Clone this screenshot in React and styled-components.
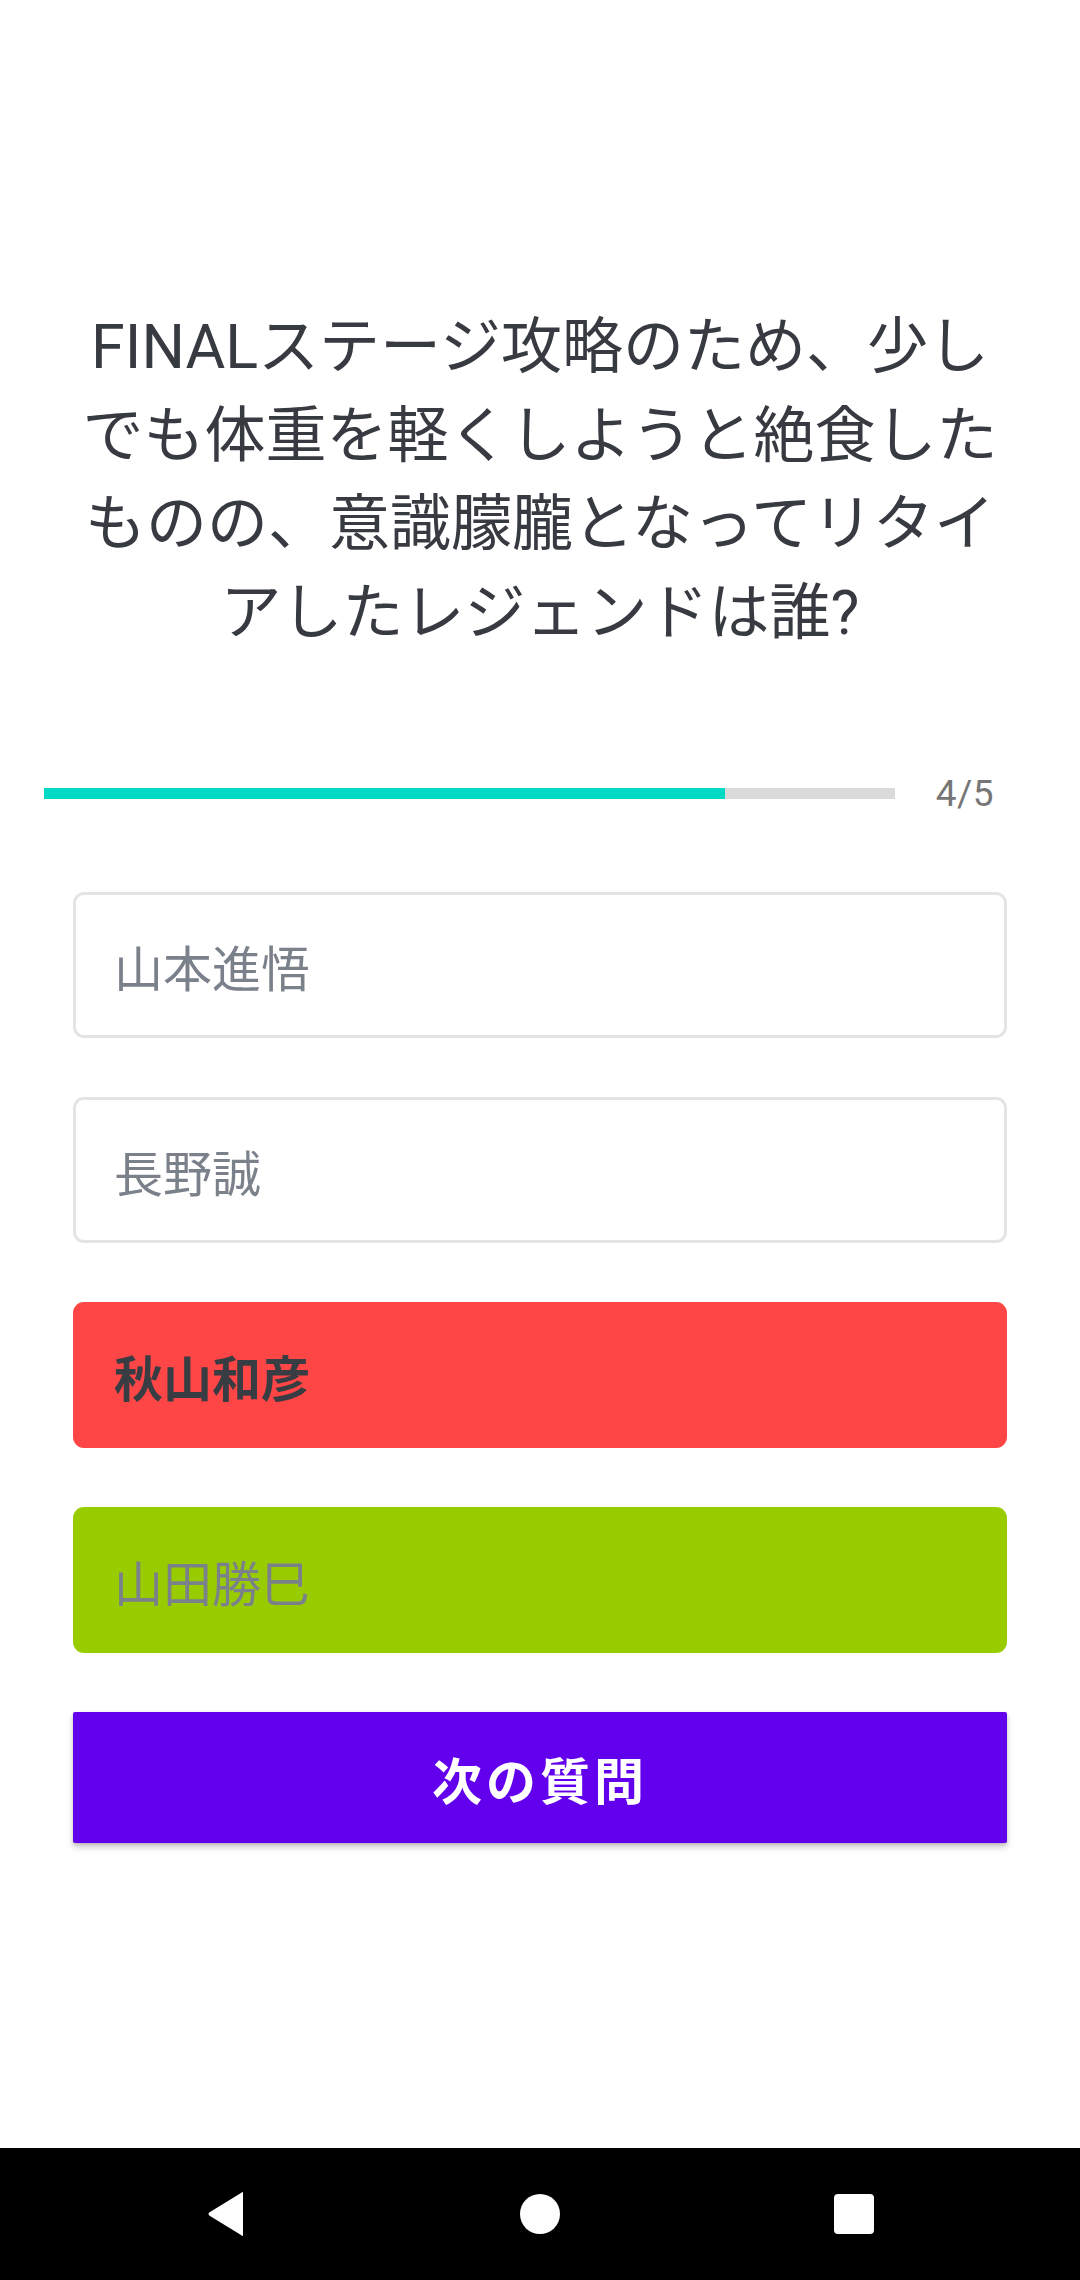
import React from 'react';
import styled, { createGlobalStyle } from 'styled-components';

const GlobalStyle = createGlobalStyle`
  html, body {
    margin: 0;
    padding: 0;
    background: #ffffff;
  }
  body {
    font-family: Roboto, "Noto Sans CJK JP", "Noto Sans", sans-serif;
  }
`;

const Screen = styled.div`
  width: 1080px;
  height: 2280px;
  display: flex;
  flex-direction: column;
  background: #ffffff;
  overflow: hidden;
`;

const Main = styled.main`
  flex: 1;
  display: flex;
  flex-direction: column;
  padding-top: 303px;
`;

const Question = styled.h1`
  margin: 0;
  padding: 0 50px;
  font-size: 61px;
  font-weight: 400;
  line-height: 88.5px;
  color: #373a41;
  text-align: center;
  white-space: nowrap;
`;

const ProgressRow = styled.div`
  display: flex;
  align-items: center;
  height: 44px;
  margin-top: 114px;
  padding: 0 86px 0 44px;
`;

const Track = styled.div`
  flex: 1;
  height: 11px;
  background: #dadada;
`;

const Fill = styled.div`
  height: 100%;
  background: #03dac5;
`;

const Counter = styled.span`
  margin-left: 41px;
  font-size: 37px;
  color: #767676;
  letter-spacing: 0.5px;
`;

const Options = styled.div`
  display: flex;
  flex-direction: column;
  gap: 59px;
  margin-top: 77px;
  padding: 0 73px;
`;

const tones = {
  idle: { bg: '#ffffff', border: '#e4e4e4', color: '#7b818a', weight: 400 },
  wrong: { bg: '#ff4646', border: '#ff4646', color: '#383c43', weight: 700 },
  right: { bg: '#99cc00', border: '#99cc00', color: '#7b818a', weight: 400 },
};

const Option = styled.div`
  box-sizing: border-box;
  height: 146px;
  display: flex;
  align-items: center;
  padding: 0 38px;
  border: 3px solid ${p => tones[p.$tone].border};
  border-radius: 11px;
  background: ${p => tones[p.$tone].bg};
  color: ${p => tones[p.$tone].color};
  font-weight: ${p => tones[p.$tone].weight};
  font-size: 49px;
`;

const NextButton = styled.button`
  height: 131px;
  border: none;
  border-radius: 2px;
  background: #6200ee;
  color: #ffffff;
  font-family: inherit;
  font-size: 50px;
  font-weight: 700;
  letter-spacing: 4px;
  box-shadow: 0 4px 6px rgba(0, 0, 0, 0.22), 0 1px 3px rgba(0, 0, 0, 0.12);
`;

const NavBar = styled.nav`
  height: 132px;
  background: #000000;
  display: flex;
  align-items: center;
  justify-content: center;
`;

const NavSlot = styled.div`
  width: 314px;
  display: flex;
  justify-content: center;
`;

const answers = [
  { name: '山本進悟', tone: 'idle' },
  { name: '長野誠', tone: 'idle' },
  { name: '秋山和彦', tone: 'wrong' },
  { name: '山田勝巳', tone: 'right' },
];

export default function App() {
  const current = 4;
  const total = 5;
  return (
    <>
      <GlobalStyle />
      <Screen>
        <Main>
          <Question>
            FINALステージ攻略のため、少し<br />
            でも体重を軽くしようと絶食した<br />
            ものの、意識朦朧となってリタイ<br />
            アしたレジェンドは誰?
          </Question>

          <ProgressRow>
            <Track>
              <Fill style={{ width: `${(current / total) * 100}%` }} />
            </Track>
            <Counter>{current}/{total}</Counter>
          </ProgressRow>

          <Options>
            {answers.map(a => (
              <Option key={a.name} $tone={a.tone}>{a.name}</Option>
            ))}
            <NextButton>次の質問</NextButton>
          </Options>
        </Main>

        <NavBar>
          <NavSlot>
            <svg width="40" height="46" viewBox="0 0 40 46">
              <path d="M37 2 L37 44 Q37 46 35 44 L4 25 Q1 23 4 21 L35 2 Q37 0 37 2 Z" fill="#fff" />
            </svg>
          </NavSlot>
          <NavSlot>
            <svg width="42" height="42" viewBox="0 0 42 42">
              <circle cx="21" cy="21" r="20" fill="#fff" />
            </svg>
          </NavSlot>
          <NavSlot>
            <svg width="42" height="42" viewBox="0 0 42 42">
              <rect x="1" y="1" width="40" height="40" rx="4" fill="#fff" />
            </svg>
          </NavSlot>
        </NavBar>
      </Screen>
    </>
  );
}
